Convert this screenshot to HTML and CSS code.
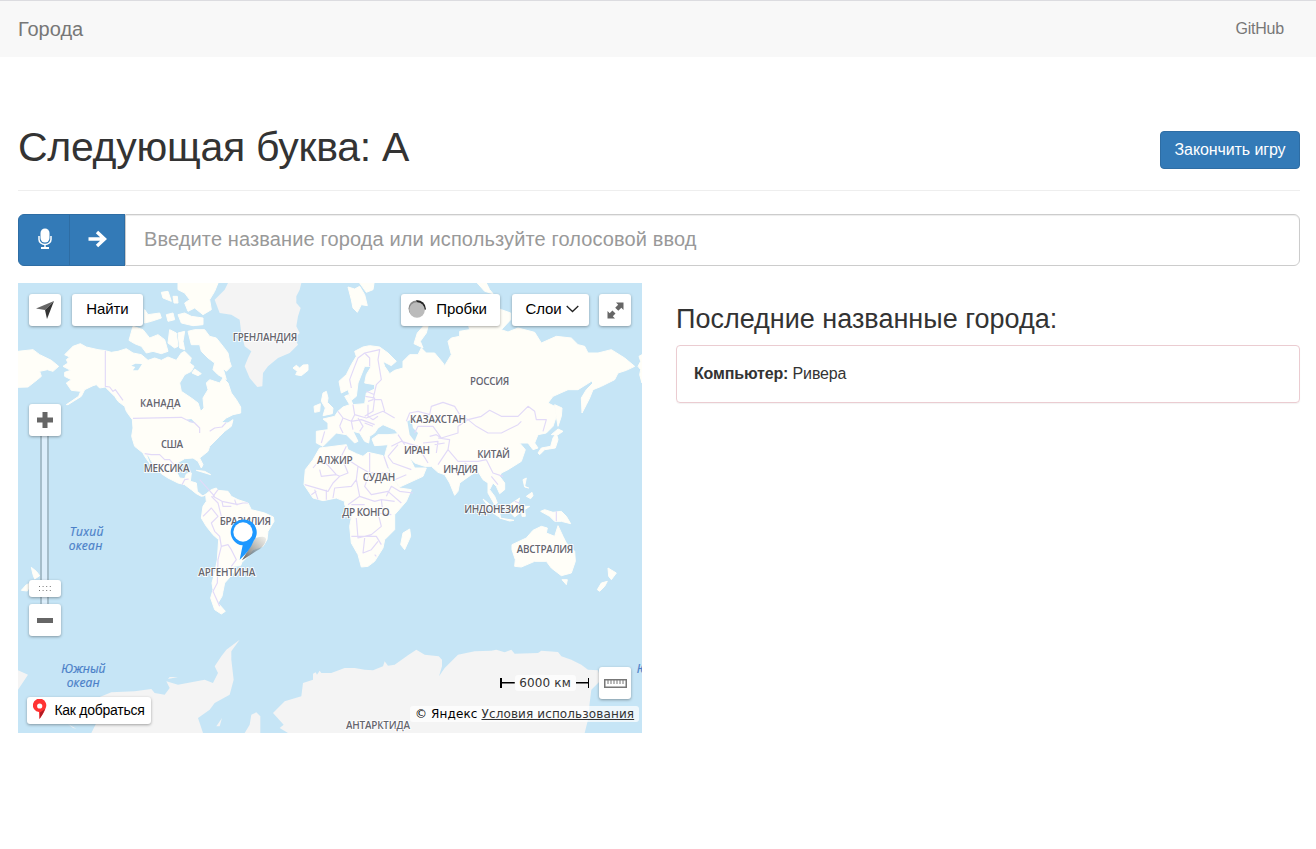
FILE: index.html
```html
<!DOCTYPE html>
<html lang="ru">
<head>
<meta charset="utf-8">
<title>Города</title>
<link rel="stylesheet" href="styles.css">
</head>
<body>
<nav class="navbar">
  <a class="brand">Города</a>
  <a class="nav-link">GitHub</a>
</nav>
<main class="container">
  <header class="page-header">
    <h1 class="title">Следующая буква: А</h1>
    <button class="btn-finish">Закончить игру</button>
  </header>
  <form class="input-group">
    <button type="button" class="addon mic" aria-label="Голосовой ввод">
      <svg width="14" height="22" viewBox="0 0 14 22"><rect x="2.500" y="0.500" width="9" height="14" rx="4.500" fill="#fff"/><path d="M1 8v3.500a6 5 0 0 0 12 0V8M7 17v3" fill="none" stroke="#fff" stroke-width="1.500"/><path d="M3 19h8v2H3z" fill="#fff"/></svg>
    </button>
    <button type="button" class="addon send" aria-label="Отправить">
      <svg width="20" height="18" viewBox="0 0 20 18"><path d="M0.500 9h15M9 2l7.500 7L9 16" fill="none" stroke="#fff" stroke-width="3.400"/></svg>
    </button>
    <input class="city-input" type="text" placeholder="Введите название города или используйте голосовой ввод">
  </form>
  <div class="columns">
    <section class="map">
      <svg class="map-canvas" viewBox="0 0 1872 1350">
        <g class="land">
          <path d="M0 205L45 200 65 215 100 232 122 250 105 265 88 260 65 265 70 280 58 290 30 312 0 313Z"/>
          <path d="M135 250L150 240 145 230 155 222 140 215 165 190 187 182 205 192 240 200 262 203 280 208 300 205 325 197 345 210 370 215 390 232 410 225 430 232 450 222 475 232 490 210 500 205 520 225 515 240 528 250 520 265 500 275 485 300 490 325 520 345 540 360 548 385 558 375 555 345 570 320 565 300 575 290 590 295 605 300 615 285 630 300 640 330 655 350 668 372 668 390 645 395 625 405 610 418 630 420 645 410 640 430 620 445 605 460 575 490 570 505 545 525 555 545 550 555 540 535 525 525 500 527 478 540 475 565 485 585 500 587 505 573 520 570 517 595 535 600 538 625 555 640 565 632 580 620 595 615 600 622 630 625 640 640 660 650 690 660 700 680 740 690 766 702 768 715 750 745 747 770 735 790 705 800 690 820 672 838 668 848 645 850 650 865 636 882 620 900 615 925 612 940 600 960 622 985 610 993 590 980 578 945 585 920 582 900 590 870 598 830 602 770 585 755 565 730 550 705 555 670 565 655 563 635 550 640 535 632 520 620 500 605 480 600 450 585 430 572 410 550 392 520 384 512 395 540 405 555 380 520 375 510 350 490 341 460 345 435 343 410 325 385 320 370 300 355 290 340 270 320 262 312 245 315 235 305 225 308 200 320 190 340 150 365 145 365 182 340 188 325 160 322 145 300 160 290 140 280 140 268 158 262Z"/>
          <path d="M345 130L375 140 395 165 420 155 440 170 450 205 430 212 405 205 385 210 370 190 350 182 333 172ZM455 140L475 150 480 190 470 195 450 180ZM480 150L500 145 495 175 500 200 485 195ZM510 145L530 140 560 140 575 160 595 165 615 190 630 210 635 235 640 250 625 265 615 255 625 290 600 275 585 260 590 240 570 225 550 205 545 185 520 185ZM380 80L390 95 425 90 430 105 400 115 380 120ZM445 95L465 90 470 110 450 115ZM480 95L500 90 520 100 555 105 555 125 525 128 490 120ZM430 28L450 25 460 55 435 45ZM465 40L478 40 480 60 468 60ZM480 0L600 0 590 25 575 50 580 80 555 95 530 75 510 85 500 60 515 50 500 30 480 20ZM530 258L550 272 540 278 522 270Z"/>
          <path d="M825 255L835 247 845 255 855 246 870 245 870 262 850 278 833 275 838 265ZM990 12L1010 18 1025 10 1040 35 1048 68 1030 65 1018 88 1005 75 1000 50ZM1025 0L1068 0 1065 20 1045 28ZM1188 182L1198 150 1220 125 1235 110 1225 150 1207 175 1215 195ZM915 330L925 325 930 345 928 358 945 375 943 392 915 398 922 375 910 355ZM888 370L907 362 905 385 890 388Z"/>
          <path d="M963 295L985 275 1000 245 1015 220 1010 205 1035 192 1055 188 1085 192 1110 210 1135 235 1120 248 1095 235 1100 250 1115 272 1130 262 1155 255 1155 235 1175 215 1200 215 1210 195 1225 210 1250 210 1275 240 1280 248 1300 215 1290 175 1300 165 1325 160 1325 145 1355 140 1350 120 1400 60 1450 80 1478 90 1478 110 1450 140 1470 147 1500 135 1550 148 1570 180 1615 160 1660 165 1680 185 1700 190 1710 210 1740 210 1780 200 1820 225 1850 250 1825 262 1800 270 1790 290 1750 310 1725 320 1715 345 1705 365 1692 390 1690 345 1705 320 1725 300 1720 295 1680 320 1650 320 1605 340 1590 360 1610 370 1615 400 1605 430 1585 450 1560 455 1550 480 1560 495 1545 500 1530 480 1505 480 1522 500 1510 535 1470 560 1450 570 1445 580 1460 600 1460 620 1445 632 1435 610 1425 600 1415 620 1430 640 1438 660 1430 665 1410 630 1410 600 1395 590 1380 565 1360 575 1325 600 1320 625 1310 637 1295 600 1280 575 1260 568 1240 550 1220 550 1190 540 1175 525 1190 555 1225 555 1215 580 1145 612 1130 590 1115 560 1100 520 1105 500 1110 485 1070 488 1062 468 1080 455 1110 455 1140 452 1130 440 1095 425 1080 435 1070 450 1055 460 1052 480 1040 475 1025 450 1005 445 1020 475 1010 480 985 455 955 450 930 475 915 490 895 480 895 445 930 440 930 420 915 408 950 400 960 385 975 372 995 365 980 340 992 335 1005 365 1040 362 1045 330 1070 318 1070 305 1040 300 1045 275 1060 250 1040 250 1020 300 1015 340 1000 352 990 320 970 330Z"/>
          <path d="M905 495L930 492 985 485 990 500 1015 512 1035 520 1050 508 1095 518 1105 545 1120 580 1145 615 1180 620 1165 655 1130 695 1130 740 1100 770 1095 795 1070 835 1050 850 1030 852 1020 815 1000 780 995 730 1000 705 980 665 980 655 955 645 915 653 885 645 858 605 862 560 885 530ZM1175 738L1178 760 1160 800 1148 785 1155 750Z"/>
          <path d="M1482 785L1525 765 1545 742 1570 730 1588 735 1585 750 1610 760 1620 728 1635 760 1645 780 1670 805 1672 835 1660 870 1630 878 1600 855 1585 835 1550 835 1510 852 1490 850 1492 830 1482 800ZM1632 890L1648 890 1645 905ZM1770 855L1795 870 1780 890 1772 880ZM1768 895L1760 910 1745 925 1738 920 1750 900ZM1568 685L1580 680 1605 688 1630 685 1645 700 1658 722 1630 715 1610 715 1595 700ZM1395 648L1410 660 1445 690 1448 705 1425 690ZM1475 665L1505 645 1500 660 1505 690 1490 702 1478 690ZM1510 672L1535 670 1520 680 1522 700 1512 700ZM1445 705L1488 712 1475 714ZM1515 590L1525 585 1520 610 1532 615 1520 612ZM1525 640L1542 628 1545 638 1538 647ZM1560 510L1570 495 1598 490 1605 465 1615 450 1620 470 1612 495 1580 500 1565 515ZM1610 365L1632 375 1630 400 1620 430 1615 400ZM1600 455L1620 438 1635 445 1620 455ZM1378 0L1405 0 1415 20 1425 32 1400 25ZM1872 215L1863 220 1868 235 1860 250 1868 260 1865 275 1872 300ZM535 562L560 565 578 575 555 568ZM40 853L55 865 65 878 50 888 45 875ZM40 900L28 924 10 922 25 905Z"/>
        </g>
        <g class="ice">
          <path d="M590 50L605 35 620 20 630 0 850 0 845 20 835 40 835 60 848 75 840 100 835 130 845 150 830 165 840 185 815 210 780 225 750 250 735 270 733 310 718 312 695 285 680 250 690 225 700 205 680 190 670 150 665 110 640 95 605 90Z"/>
          <path d="M220 1350L235 1320 225 1250 280 1228 350 1225 400 1218 410 1230 440 1235 455 1215 445 1195 480 1205 560 1190 585 1200 600 1170 590 1150 610 1120 625 1100 665 1070 640 1105 640 1130 647 1190 635 1235 590 1260 575 1280 540 1305 555 1350ZM0 1162L30 1175 0 1220ZM455 1182L480 1182 450 1188ZM595 1330L612 1305 605 1330ZM680 1350L695 1325 700 1295 715 1288 727 1300 727 1350ZM150 1323L175 1337 165 1335Z"/>
          <path d="M765 1290L800 1255 850 1240 855 1200 885 1190 885 1172 893 1168 897 1175 905 1163 910 1170 940 1170 980 1155 1010 1155 1040 1160 1065 1162 1095 1150 1100 1135 1110 1148 1130 1145 1170 1117 1195 1100 1220 1115 1262 1120 1272 1130 1272 1150 1263 1180 1280 1155 1320 1115 1370 1105 1420 1103 1435 1100 1460 1108 1480 1100 1490 1112 1560 1110 1570 1103 1620 1107 1630 1120 1660 1130 1690 1145 1710 1160 1740 1162 1750 1190 1720 1220 1715 1260 1710 1310 1700 1350 810 1350 785 1335 797 1325Z"/>
        </g>
        <g class="lakes">
          <path d="M340 248L352 242 372 243 360 262 345 262 352 252ZM505 410L520 408 532 420 515 418ZM1168 415L1180 410 1185 435 1200 450 1190 475 1175 455Z"/>
        </g>
        <g class="borders">
          <path d="M262 203V310L275 312 285 325 292 320 315 352M345 406L490 403 505 410 530 420 545 435V450M575 445L590 435 612 432 625 418M380 512L400 515 425 515 440 530 455 530 470 548M492 605L500 590 512 588M545 590L590 640M600 620L585 640 612 655 615 670 640 670M555 700L580 675 600 700 580 720 590 745 605 760 610 790 630 785 640 800 655 830 640 850M610 790L600 830 598 900 585 925 605 970M612 655L660 665M580 640L600 660 610 700M650 650L655 665 675 660 690 660"/>
          <path d="M1000 315L995 290 1010 250 1020 225 1040 210 1062 205 1085 200 1080 230 1090 290 1075 305 1065 350 1050 355M1040 210L1055 225 1055 250M1042 340L1070 345 1065 385 1040 400M1005 365L1010 395 1045 405 1095 385 1130 405M960 385L975 405 1000 415 1030 410 1070 425M1000 415L1005 440M1040 420L1065 430M1090 350L1100 385M1045 325L1070 335M975 405L965 430M1010 395L1000 415M1020 405L1035 430 1025 445M1050 365V400L1065 410 1080 400M1070 350L1090 350M920 445L910 480M965 430L975 450"/>
          <path d="M1165 415L1175 390 1200 385 1235 395 1240 370 1275 358 1310 370 1325 395 1350 410 1390 400 1415 382 1450 400 1500 400 1530 370 1550 385 1555 410 1585 410 1575 445M1350 410L1375 430 1410 450 1450 450 1500 425 1510 415M1350 410L1320 430 1320 450 1270 465 1245 430 1200 430 1190 450M1260 465L1295 470 1290 500 1320 535 1380 535 1405 530M1290 500L1260 545M1215 480L1260 475 1255 510M1120 490L1150 475 1200 490 1230 540M1340 540L1370 560M1405 530L1425 570 1455 580M1420 580L1440 605M1140 455L1160 485M1110 520L1140 485M1270 465L1255 455 1235 460M1280 480L1250 485"/>
          <path d="M910 525L955 575 965 580 945 600 930 625 860 605M985 490L970 520 990 570 965 580M990 530L1020 550 1015 590 1000 610 950 615 945 645M1055 510V570H1110M1055 570L1040 610 1060 635 1110 625 1150 660M1015 590L1025 640 990 665M1025 640L1070 655 1090 650 1130 655M1015 705L1020 765 1060 755 1090 730 1080 690 1120 695M1000 760L1075 760 1090 785M1040 765L1035 810 1060 800 1080 775M890 620L900 650M925 620L925 650M1070 815L1075 820M1105 640L1120 610 1145 625 1185 630M1098 520L1110 555M1110 520L1125 540 1180 560M910 525L885 555M955 575L910 580 905 560M1020 550L1055 570M1130 590L1165 575M1000 665L1040 665M1090 650L1095 690M880 635L895 625"/>
          <path d="M1615 685V715M1490 655L1505 660"/>
        </g>
        <g class="country">
          <text x="366" y="372" textLength="122">КАНАДА</text><text x="429" y="494" textLength="66">США</text><text x="377" y="568" textLength="138">МЕКСИКА</text>
          <text x="644" y="173" textLength="194">ГРЕНЛАНДИЯ</text><text x="1356" y="307" textLength="118">РОССИЯ</text><text x="1176" y="421" textLength="168">КАЗАХСТАН</text>
          <text x="897" y="544" textLength="107">АЛЖИР</text><text x="1034" y="595" textLength="98">СУДАН</text><text x="1158" y="513" textLength="78">ИРАН</text><text x="973" y="699" textLength="142">ДР КОНГО</text>
          <text x="1378" y="524" textLength="98">КИТАЙ</text><text x="1276" y="570" textLength="104">ИНДИЯ</text><text x="1339" y="689" textLength="181">ИНДОНЕЗИЯ</text><text x="1496" y="811" textLength="170">АВСТРАЛИЯ</text>
          <text x="605" y="726" textLength="154">БРАЗИЛИЯ</text><text x="541" y="880" textLength="171">АРГЕНТИНА</text><text x="984" y="1337" textLength="192">АНТАРКТИДА</text>
        </g>
        <g class="ocean">
          <text x="155" y="758" textLength="101">Тихий</text><text x="152" y="801" textLength="101">океан</text><text x="130" y="1170" textLength="132">Южный</text><text x="146" y="1212" textLength="99">океан</text><text x="1856" y="1171">Ю</text>
        </g>
        <defs><linearGradient id="shade" x1="0" y1="1" x2="1" y2="0"><stop offset="0" stop-color="#333" stop-opacity=".8"/><stop offset="1" stop-color="#777" stop-opacity=".1"/></linearGradient></defs>
        <path d="M672 832L712 765Q745 755 744 770Q740 792 715 804Z" fill="url(#shade)"/>
        <path d="M665 830L674 787A39 39 0 1 1 708 772Q695 805 665 830Z" fill="#1e98ff"/><circle cx="675" cy="747" r="29" fill="#fff"/>
      </svg>
      <div class="control locate"><svg width="18" height="18" viewBox="0 0 18 18"><path d="M18 0L0 7.500 9 9Z" fill="#666"/><path d="M18 0L9 9 11 18Z" fill="#333"/></svg></div>
      <div class="control find">Найти</div>
      <div class="control traffic"><svg width="19" height="18" viewBox="0 0 19 18"><circle cx="8.500" cy="8.500" r="8" fill="#888"/><path d="M8 .3A9 9 0 0 1 18 9.500L14 10Z" fill="#222"/><circle cx="9" cy="10" r="7.800" fill="#bbb"/></svg><span>Пробки</span></div>
      <div class="control layers"><span>Слои</span><svg width="13" height="8" viewBox="0 0 13 8"><path d="M.7 1L6.500 6.500 12.300 1" fill="none" stroke="#222" stroke-width="1.300"/></svg></div>
      <div class="control full"><svg width="17" height="17" viewBox="0 0 17 17"><path d="M9 .5h7.500v7.500l-2.200-2.200-3 3L8.200 5.700l3-3ZM.5 9l2.200 2.200 2.700-2.700 3.100 3.100-2.700 2.700L8 16.500H.5Z" fill="#666"/><path d="M5 5l7 7" stroke="#fff" stroke-width="2"/></svg></div>
      <div class="zoom-track"></div>
      <div class="control plus"><svg width="16" height="16" viewBox="0 0 16 16"><path d="M5.500 0h5v5.500H16v5h-5.500V16h-5v-5.500H0v-5h5.500Z" fill="#666"/></svg></div>
      <div class="control handle"><svg width="12" height="5" viewBox="0 0 12 5"><path d="M0 .5h12M0 4.500h12" stroke="#777" stroke-dasharray="1 2.600"/></svg></div>
      <div class="control minus"><svg width="16" height="5" viewBox="0 0 16 5"><path d="M0 0h16v5H0Z" fill="#666"/></svg></div>
      <div class="control route"><svg width="14" height="21" viewBox="0 0 14 21"><path d="M6.500 20L6 13A6.700 6.700 0 1 1 12.500 9.500Q11 14 6.500 20Z" fill="#f33"/><path d="M6.500 20L7 13.500 12 10Q10 15 6.500 20Z" fill="#b01c24"/><circle cx="6.700" cy="7" r="2.600" fill="#fff"/></svg><span>Как добраться</span></div>
      <div class="control ruler"><svg width="23" height="9" viewBox="0 0 23 9"><path d="M.75.75h21.500v7.500H.75Z" fill="none" stroke="#777" stroke-width="1.500"/><path d="M4 1v4M7 1v4M10 1v4M13 1v4M16 1v4M19 1v4" stroke="#777"/></svg></div>
      <div class="scale"><span class="scale-line left"></span><span class="scale-label">6000 км</span><span class="scale-line right"></span></div>
      <div class="copyright"><span class="owner">© Яндекс</span><a class="terms">Условия использования</a></div>
    </section>
    <section class="history">
      <h3 class="history-title">Последние названные города:</h3>
      <div class="panel"><strong>Компьютер:</strong> Ривера</div>
    </section>
  </div>
</main>
</body>
</html>
```
FILE: styles.css
```css
* { box-sizing: border-box; }
body { margin: 0; background: #fff; color: #333; font: 16px/24px "Liberation Sans", Arial, sans-serif; }
.navbar { display: flex; justify-content: space-between; align-items: center; height: 57px; padding: 0 32px 0 18px; background: #f8f8f8; border-top: 1px solid #dcdce0; color: #777; }
.brand { font-size: 20px; }
.nav-link { font-size: 16px; padding-bottom: 1px; letter-spacing: -.2px; }
.container { padding: 0 16px 0 18px; }
.page-header { display: flex; justify-content: space-between; align-items: flex-start; height: 134px; padding-top: 67px; border-bottom: 1px solid #eee; }
.title { margin: 0; font-size: 41px; line-height: 46px; font-weight: 400; letter-spacing: -.27px; white-space: nowrap; }
.btn-finish { width: 140px; height: 38px; margin-top: 7px; padding: 0; background: #337ab7; border: 1px solid #2e6da4; border-radius: 4px; color: #fff; font: 16px/24px "Liberation Sans", Arial, sans-serif; letter-spacing: -.1px; white-space: nowrap; }
.input-group { display: flex; height: 52px; margin: 23px 0 17px; }
.addon { display: flex; align-items: center; justify-content: center; padding: 0 0 3px 1px; border: 1px solid #2e6da4; background: #337ab7; }
.mic { width: 52px; border-radius: 6px 0 0 6px; }
.send { width: 56px; margin-left: -1px; }
.city-input { flex: 1; min-width: 0; padding: 0 18px 2px; border: 1px solid #ccc; border-radius: 0 6px 6px 0; box-shadow: inset 0 1px 1px rgba(0,0,0,.075); font: 20px "Liberation Sans", Arial, sans-serif; letter-spacing: .12px; }
.city-input::placeholder { color: #999; opacity: 1; }
.columns { display: grid; grid-template-columns: 624px 624px; gap: 34px; }
.map { position: relative; height: 450px; overflow: hidden; background: #c6e5f6; }
.map-canvas { display: block; width: 624px; height: 450px; }
.land { fill: #fffef8; stroke: #fffef8; stroke-width: 3; stroke-linejoin: round; }
.ice { fill: #f4f4f4; }
.lakes { fill: #c6e5f6; }
.borders { fill: none; stroke: #e2daf8; stroke-width: 3.5; stroke-linejoin: round; }
.country { font: 600 30px "Open Sans", sans-serif; fill: #66666e; stroke: #fff; stroke-width: 5; paint-order: stroke; }
.ocean { font: italic 500 36px "Open Sans", sans-serif; fill: #4b80c8; stroke: #4b80c8; stroke-width: .6; }
.control { position: absolute; display: flex; align-items: center; justify-content: center; background: #fff; border-radius: 3px; box-shadow: 0 1px 3px rgba(0,0,0,.35); height: 32px; width: 32px; color: #000; font-size: 15px; line-height: 20px; letter-spacing: -.1px; white-space: nowrap; }
.locate { left: 11px; top: 11px; }
.find { left: 54px; top: 11px; width: 71px; padding-bottom: 2px; }
.traffic { left: 383px; top: 11px; width: 99px; gap: 9px; padding-right: 6px; padding-bottom: 2px; }
.layers { left: 494px; top: 11px; width: 77px; gap: 4px; padding: 0 0 2px 3px; }
.full { left: 581px; top: 11px; }
.zoom-track { position: absolute; left: 22px; top: 150px; width: 9px; height: 174px; background: #dceefb; border: solid #a5bdca; border-width: 0 2px; }
.plus { left: 11px; top: 121px; }
.handle { left: 11px; top: 297px; height: 17px; }
.minus { left: 11px; top: 321px; }
.route { left: 9px; top: 414px; width: 124px; height: 27px; gap: 7px; padding-bottom: 2px; font-size: 14px; letter-spacing: -.25px; }
.ruler { left: 581px; top: 384px; }
.scale { position: absolute; left: 482px; top: 392px; display: flex; align-items: center; width: 89px; height: 16px; }
.scale-line { flex: 1; height: 10px; background: linear-gradient(#000, #000) center / 100% 1.5px no-repeat; }
.left { border-left: 2px solid #000; }
.right { border-right: 1px solid #000; }
.scale-label { width: 61px; border-radius: 3px; background: rgba(255,255,255,.7); color: #333; font: 12px/16px "DejaVu Sans", sans-serif; letter-spacing: .15px; text-align: center; white-space: nowrap; }
.copyright { position: absolute; left: 392px; top: 423px; display: flex; width: 229px; height: 16px; padding-left: 5px; gap: 4px; border-radius: 3px; background: rgba(255,255,255,.7); color: #000; font: 12px/16px "DejaVu Sans", sans-serif; letter-spacing: .12px; white-space: nowrap; }
.terms { color: #333; text-decoration: underline; }
.history-title { margin: 20px 0 10px; font-size: 27px; line-height: 32px; font-weight: 400; white-space: nowrap; }
.panel { height: 58px; padding: 16px 17px; border: 1px solid #ebccd1; border-radius: 4px; box-shadow: 0 1px 1px rgba(0,0,0,.05); letter-spacing: -.15px; }
```
